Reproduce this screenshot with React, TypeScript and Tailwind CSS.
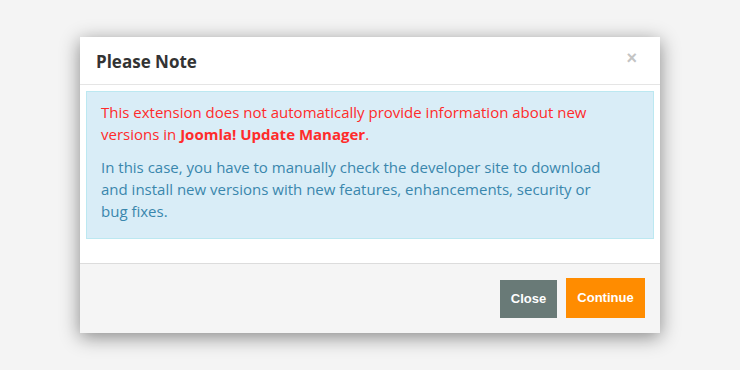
import React from "react";

export default function App() {
  return (
    <div className="w-[740px] h-[370px] bg-[#f4f4f4] flex items-start justify-center pt-[37px]" style={{ fontFamily: '"Open Sans", sans-serif' }}>
      <div className="w-[580px] h-[296px] bg-white flex flex-col shadow-[0_4px_18px_rgba(0,0,0,0.45)]">
        <div className="h-[48px] flex items-center justify-between pl-[16px] pr-[23px] border-b border-[#e5e5e5]">
          <h3 className="text-[17px] font-bold text-[#333] leading-none mt-[2px]">Please Note</h3>
          <span className="text-[#c4c4c4] text-[18px] font-bold leading-none mb-[5px]" style={{ fontFamily: '"Liberation Sans", sans-serif' }}>×</span>
        </div>
        <div className="flex-1 px-[6px] pt-[6px]">
          <div className="bg-[#d9edf7] border border-[#bce8f1] h-[148px] pl-[14px] pt-[9px] text-[15px] leading-[22px]">
            <p className="text-[#ff2b2b] mb-[11px] w-[505px]">
              This extension does not automatically provide information about new versions in <b>Joomla! Update Manager</b>.
            </p>
            <p className="text-[#3a87ad] w-[505px]">
              In this case, you have to manually check the developer site to download and install new versions with new features, enhancements, security or bug fixes.
            </p>
          </div>
        </div>
        <div className="h-[70px] bg-[#f5f5f5] border-t border-[#dcdcdc] flex items-start justify-end pr-[15px] pt-[14px] gap-[9px]" style={{ fontFamily: '"Liberation Sans", sans-serif' }}>
          <button className="mt-[2px] h-[38px] w-[57px] bg-[#697a77] text-white text-[13px] font-bold">Close</button>
          <button className="h-[40px] w-[79px] bg-[#ff8c00] text-white text-[13px] font-bold">Continue</button>
        </div>
      </div>
    </div>
  );
}
